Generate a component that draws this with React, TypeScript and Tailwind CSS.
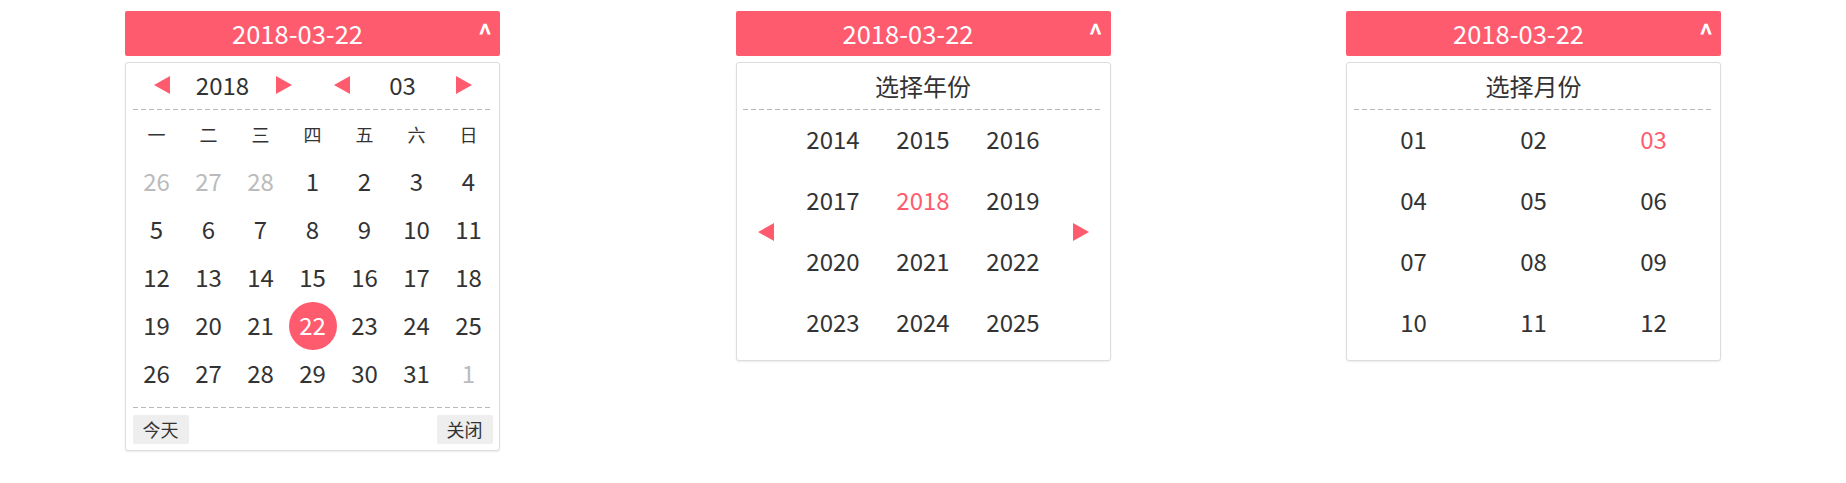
import React from "react";

const FONT = { fontFamily: '"Noto Sans CJK SC", "Noto Sans", sans-serif' };

function Header() {
  return (
    <div className="flex h-[45px] w-[375px] items-center rounded-[2px] bg-[#ff5b6e] text-white">
      <div className="flex-1 pb-[3px] text-center text-[25.5px] leading-[45px]">2018-03-22</div>
      <div className="flex w-[30px] items-center justify-center pb-[4px] text-[24px] font-bold leading-none">^</div>
    </div>
  );
}

function TriLeft() {
  return <span className="inline-block h-0 w-0 border-y-[9px] border-r-[16px] border-y-transparent border-r-[#ff5b6e]" />;
}
function TriRight() {
  return <span className="inline-block h-0 w-0 border-y-[9px] border-l-[16px] border-y-transparent border-l-[#ff5b6e]" />;
}

function Panel({ children }: { children: React.ReactNode }) {
  return (
    <div className="mt-[6px] w-[375px] rounded-[3px] border border-[#dddddd] bg-white px-[6.5px] shadow-[0_1px_2px_rgba(0,0,0,0.08)]">
      {children}
    </div>
  );
}

function Dashed() {
  return <div className="h-[1px] bg-[repeating-linear-gradient(90deg,#b8b8b8_0_5px,transparent_5px_8px)]" />;
}

function DayPicker() {
  const weekdays = ["一", "二", "三", "四", "五", "六", "日"];
  const days: { d: number; muted?: boolean; sel?: boolean }[] = [
    { d: 26, muted: true },
    { d: 27, muted: true },
    { d: 28, muted: true },
  ];
  for (let i = 1; i <= 31; i++) days.push({ d: i, sel: i === 22 });
  days.push({ d: 1, muted: true });
  return (
    <div>
      <Header />
      <Panel>
        <div className="flex h-[46px] items-center pb-[2px] text-[24px] text-[#333333]">
          <div className="flex w-[180px] items-center">
            <div className="flex w-[58px] justify-center"><TriLeft /></div>
            <div className="flex-1 text-center">2018</div>
            <div className="flex w-[58px] justify-center"><TriRight /></div>
          </div>
          <div className="flex w-[180px] items-center">
            <div className="flex w-[58px] justify-center"><TriLeft /></div>
            <div className="flex-1 text-center">03</div>
            <div className="flex w-[58px] justify-center"><TriRight /></div>
          </div>
        </div>
        <Dashed />
        <div className="-mx-[2px] grid grid-cols-[repeat(7,52px)]">
          {weekdays.map((w) => (
            <div key={w} className="flex h-[48px] items-center justify-center text-[18px] text-[#333333]">
              {w}
            </div>
          ))}
          {days.map((x, i) => (
            <div key={i} className="flex h-[48px] items-center justify-center">
              {x.sel ? (
                <div className="flex h-[48px] w-[48px] items-center justify-center rounded-full bg-[#ff5b6e] pb-[3px] text-[24px] text-white">
                  {x.d}
                </div>
              ) : (
                <span className={"pb-[3px] text-[24px] " + (x.muted ? "text-[#bbbbbb]" : "text-[#333333]")}>{x.d}</span>
              )}
            </div>
          ))}
        </div>
        <div className="mt-[9px]">
          <Dashed />
        </div>
        <div className="flex justify-between pb-[6px] pt-[7px]">
          <div className="h-[29px] rounded-[2px] bg-[#eeeeee] px-[10px] text-[18px] leading-[29px] text-[#333333]">今天</div>
          <div className="h-[29px] rounded-[2px] bg-[#eeeeee] px-[10px] text-[18px] leading-[29px] text-[#333333]">关闭</div>
        </div>
      </Panel>
    </div>
  );
}

function YearPicker() {
  const years = [2014, 2015, 2016, 2017, 2018, 2019, 2020, 2021, 2022, 2023, 2024, 2025];
  return (
    <div>
      <Header />
      <Panel>
        <div className="flex h-[46px] items-center justify-center pb-[1px] text-[24px] text-[#333333]">选择年份</div>
        <Dashed />
        <div className="flex items-center pb-[6px]">
          <div className="flex w-[45px] justify-center"><TriLeft /></div>
          <div className="grid flex-1 grid-cols-3">
            {years.map((y) => (
              <div
                key={y}
                className={"flex h-[61px] items-center justify-center pb-[4px] text-[24px] " + (y === 2018 ? "text-[#ff5b6e]" : "text-[#333333]")}
              >
                {y}
              </div>
            ))}
          </div>
          <div className="flex w-[45px] justify-center"><TriRight /></div>
        </div>
      </Panel>
    </div>
  );
}

function MonthPicker() {
  const months = ["01", "02", "03", "04", "05", "06", "07", "08", "09", "10", "11", "12"];
  return (
    <div>
      <Header />
      <Panel>
        <div className="flex h-[46px] items-center justify-center pb-[1px] text-[24px] text-[#333333]">选择月份</div>
        <Dashed />
        <div className="grid grid-cols-3 pb-[6px]">
          {months.map((m) => (
            <div
              key={m}
              className={"flex h-[61px] items-center justify-center pb-[4px] text-[24px] " + (m === "03" ? "text-[#ff5b6e]" : "text-[#333333]")}
            >
              {m}
            </div>
          ))}
        </div>
      </Panel>
    </div>
  );
}

export default function App() {
  return (
    <div className="flex h-[483px] w-[1846px] items-start justify-between bg-white px-[125px] pt-[11px]" style={FONT}>
      <DayPicker />
      <YearPicker />
      <MonthPicker />
    </div>
  );
}
